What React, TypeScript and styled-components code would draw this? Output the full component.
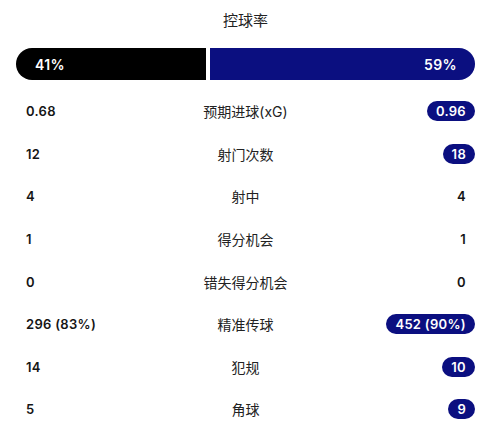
import React from "react";
import styled, { createGlobalStyle } from "styled-components";

const Global = createGlobalStyle`
  html, body { margin: 0; padding: 0; background: #ffffff; }
  body { font-family: Inter, "Noto Sans", "Noto Sans CJK SC", sans-serif; color: #151515; }
`;

const NAVY = "#0b0f80";

const Wrap = styled.div`
  width: 459px;
  padding: 0 25px 0 16px;
`;

const Title = styled.div`
  height: 40px;
  line-height: 40px;
  text-align: center;
  font-family: "Noto Sans CJK SC", sans-serif;
  font-size: 15px;
  color: #222;
`;

const Bar = styled.div`
  margin-top: 8px;
  display: flex;
  gap: 4px;
  height: 32px;
`;

const Segment = styled.div<{ $side: "home" | "away" }>`
  display: flex;
  align-items: center;
  justify-content: ${(p) => (p.$side === "home" ? "flex-start" : "flex-end")};
  padding: ${(p) => (p.$side === "home" ? "0 0 0 19px" : "0 18px 0 0")};
  background: ${(p) => (p.$side === "home" ? "#000000" : NAVY)};
  border-radius: ${(p) => (p.$side === "home" ? "16px 0 0 16px" : "0 16px 16px 0")};
  color: #fff;
  font-size: 14px;
  font-weight: 600;
  letter-spacing: 0.4px;
`;

const List = styled.div`
  margin-top: 10px;
  display: flex;
  flex-direction: column;
`;

const Row = styled.div`
  height: 42.6px;
  display: grid;
  grid-template-columns: 1fr auto 1fr;
  align-items: center;
`;

const Left = styled.div`
  padding-left: 10px;
  font-size: 13px;
  font-weight: 600;
  letter-spacing: 0.3px;
  justify-self: start;
`;

const Label = styled.div`
  font-family: Inter, "Noto Sans CJK SC", sans-serif;
  font-size: 14px;
  color: #222;
  text-align: center;
`;

const Right = styled.div<{ $hl: boolean }>`
  justify-self: end;
  height: 20px;
  line-height: 20px;
  padding: 0 9px;
  border-radius: 10px;
  font-size: 13px;
  font-weight: 600;
  letter-spacing: 0.3px;
  background: ${(p) => (p.$hl ? NAVY : "transparent")};
  color: ${(p) => (p.$hl ? "#fff" : "#151515")};
`;

const rows = [
  { l: "0.68", label: "预期进球(xG)", r: "0.96", hl: true },
  { l: "12", label: "射门次数", r: "18", hl: true },
  { l: "4", label: "射中", r: "4", hl: false },
  { l: "1", label: "得分机会", r: "1", hl: false },
  { l: "0", label: "错失得分机会", r: "0", hl: false },
  { l: "296 (83%)", label: "精准传球", r: "452 (90%)", hl: true },
  { l: "14", label: "犯规", r: "10", hl: true },
  { l: "5", label: "角球", r: "9", hl: true },
];

export default function App() {
  return (
    <Wrap>
      <Global />
      <Title>控球率</Title>
      <Bar>
        <Segment $side="home" style={{ flex: 41 }}>41%</Segment>
        <Segment $side="away" style={{ flex: 59 }}>59%</Segment>
      </Bar>
      <List>
        {rows.map((r) => (
          <Row key={r.label}>
            <Left>{r.l}</Left>
            <Label>{r.label}</Label>
            <Right $hl={r.hl}>{r.r}</Right>
          </Row>
        ))}
      </List>
    </Wrap>
  );
}
